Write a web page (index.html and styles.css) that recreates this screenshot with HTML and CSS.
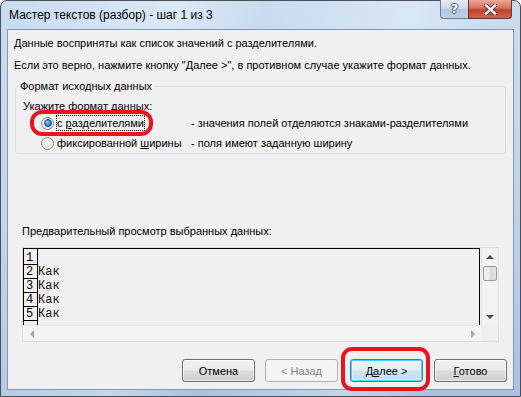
FILE: index.html
```html
<!DOCTYPE html>
<html lang="ru">
<head>
<meta charset="utf-8">
<title>Мастер текстов</title>
<link rel="stylesheet" href="styles.css">
</head>
<body>
<div class="window">
  <div class="titlebar">
    <span class="title">Мастер текстов (разбор) - шаг 1 из 3</span>
    <div class="caption-btns">
      <div class="cbtn help">?</div>
      <div class="cbtn close">
        <svg width="13" height="11" viewBox="0 0 13 11">
          <path d="M2 1.5 L11 9.5 M11 1.5 L2 9.5" stroke="#5a2a22" stroke-width="4.2" stroke-linecap="square"/>
          <path d="M2 1.5 L11 9.5 M11 1.5 L2 9.5" stroke="#ffffff" stroke-width="2.4" stroke-linecap="square"/>
        </svg>
      </div>
    </div>
  </div>
  <div class="client">
    <p class="line l1">Данные восприняты как список значений с разделителями.</p>
    <p class="line l2">Если это верно, нажмите кнопку "Далее &gt;", в противном случае укажите формат данных.</p>
    <fieldset class="group">
      <legend>Формат исходных данных</legend>
      <div class="prompt">Укажите формат данных:</div>
      <div class="opt first">
        <span class="radio checked"></span>
        <span class="optlabel focus">с <u>р</u>азделителями</span>
        <span class="desc">- значения полей отделяются знаками-разделителями</span>
        <div class="mark mark-radio"></div>
      </div>
      <div class="opt">
        <span class="radio"></span>
        <span class="optlabel">фиксированной <u>ш</u>ирины</span>
        <span class="desc">- поля имеют заданную ширину</span>
      </div>
    </fieldset>
    <div class="preview-label">Предварительный просмотр выбранных данных:</div>
    <div class="preview">
      <div class="data">
        <div class="row r1"><span class="num">1</span><span class="cell"></span></div>
        <div class="row"><span class="num">2</span><span class="cell">Как</span></div>
        <div class="row"><span class="num">3</span><span class="cell">Как</span></div>
        <div class="row"><span class="num">4</span><span class="cell">Как</span></div>
        <div class="row"><span class="num">5</span><span class="cell">Как</span></div>
        <div class="row"><span class="num"></span><span class="cell"></span></div>
      </div>
      <div class="vscroll">
        <div class="sbtn"><span class="tri up"></span></div>
        <div class="thumb"></div>
        <div class="track"></div>
        <div class="sbtn"><span class="tri down"></span></div>
      </div>
      <div class="hscroll">
        <div class="hbtn"><span class="tri left"></span></div>
        <div class="htrack"></div>
        <div class="hbtn"><span class="tri right"></span></div>
      </div>
      <div class="corner"></div>
    </div>
    <div class="buttons">
      <button class="btn cancel">Отмена</button>
      <button class="btn back" disabled>&lt; Назад</button>
      <button class="btn next">Д<u>а</u>лее &gt;<span class="mark mark-next"></span></button>
      <button class="btn finish"><u>Г</u>отово</button>
    </div>
  </div>
</div>
</body>
</html>
```

FILE: styles.css
```css
html, body {
  margin: 0;
  padding: 0;
}
body {
  width: 521px;
  height: 397px;
  overflow: hidden;
  font-family: "Liberation Sans", Arial, sans-serif;
  font-size: 11px;
  color: #000;
  background: #fff;
}

.window {
  box-sizing: border-box;
  width: 521px;
  height: 397px;
  border: 1px solid #4b5057;
  border-radius: 7px 7px 0 0;
  padding: 0 6px 6px 6px;
  display: flex;
  flex-direction: column;
  background:
    linear-gradient(100deg, rgba(255,255,255,0.0) 0%, rgba(255,255,255,0.35) 30%, rgba(255,255,255,0.0) 45%, rgba(255,255,255,0.3) 70%, rgba(255,255,255,0) 85%),
    linear-gradient(180deg, #c9dcf1 0%, #bfd4ed 50%, #a9c2e1 100%);
}

.titlebar {
  height: 28px;
  display: flex;
  align-items: flex-start;
}
.title {
  font-size: 12px;
  line-height: 28px;
  padding-left: 2px;
  color: #000;
}
.caption-btns {
  margin-left: auto;
  margin-right: 2px;
  margin-top: -1px;
  display: flex;
}
.cbtn {
  height: 19px;
  box-sizing: border-box;
  display: flex;
  align-items: center;
  justify-content: center;
}
.help {
  width: 28px;
  border: 1px solid #6b7c92;
  border-top: none;
  border-right: none;
  border-radius: 0 0 0 4px;
  background: linear-gradient(180deg, #e4ecf6 0%, #ccdaea 45%, #b4c6dc 55%, #c2d3e6 100%);
  color: #fff;
  font-family: "DejaVu Sans", sans-serif;
  font-weight: bold;
  font-size: 13px;
  text-shadow: 1px 0 0 #4c5a6c, -1px 0 0 #4c5a6c, 0 1px 0 #4c5a6c, 0 -1px 0 #4c5a6c;
  padding-bottom: 1px;
}
.close {
  width: 44px;
  border: 1px solid #6a3328;
  border-top: none;
  border-radius: 0 0 4px 0;
  background: linear-gradient(180deg, #e9a99c 0%, #d7705f 45%, #c0402b 55%, #d2624e 100%);
}

.client {
  flex: 1;
  position: relative;
  border: 1px solid #8597ae;
  background: #f0f0f0;
  padding: 6px 6px 0 6px;
  display: flex;
  flex-direction: column;
}

.line {
  margin: 0;
  line-height: 14px;
  white-space: nowrap;
}
.l2 {
  margin-top: 8px;
}

.group {
  margin: 7px 0 0 1px;
  width: 491px;
  box-sizing: border-box;
  border: 1px solid #d5dfe5;
  border-radius: 3px;
  padding: 0 0 0 0;
  min-width: 0;
}
.group legend {
  margin-left: 2px;
  padding: 0 2px;
  line-height: 14px;
}
.prompt {
  padding: 6px 0 0 7px;
  line-height: 14px;
}
.opt {
  position: relative;
  height: 20px;
  display: flex;
  align-items: center;
  padding-left: 25px;
}
.radio {
  box-sizing: border-box;
  width: 13px;
  height: 13px;
  border-radius: 50%;
  border: 1px solid #8f8f8f;
  background: radial-gradient(circle at 50% 40%, #fdfdfd 0%, #e3e3e3 70%, #d0d0d0 100%);
  display: flex;
  align-items: center;
  justify-content: center;
  flex: none;
}
.radio.checked::after {
  content: "";
  width: 6px;
  height: 6px;
  border-radius: 50%;
  background: radial-gradient(circle at 40% 35%, #8fd3ff 0%, #2a8ad4 55%, #14508f 100%);
  border: 0.5px solid #1c4f86;
}
.optlabel {
  margin-left: 2px;
  width: 134px;
  line-height: 14px;
  white-space: nowrap;
}
.optlabel.focus {
  width: auto;
  border: 1px dotted #000;
  padding: 0 0 0 0;
  margin-right: 46px;
}
.opt .optlabel:not(.focus) {
  margin-left: 3px;
  margin-right: 0;
}
.opt:not(.first) .desc {
  margin-left: 0;
}
.desc {
  white-space: nowrap;
  line-height: 14px;
}

.mark {
  position: absolute;
  box-sizing: border-box;
  border: 4px solid #e8141f;
  pointer-events: none;
}
.mark-radio {
  left: 14px;
  top: -3px;
  width: 123px;
  height: 26px;
  border-radius: 12px;
}

.preview-label {
  margin: 70px 0 0 8px;
  line-height: 14px;
}
.preview {
  margin: 9px 0 0 8px;
  width: 477px;
  height: 95px;
  box-sizing: border-box;
  border: 1px solid #dcdcdc;
  display: grid;
  grid-template-columns: 1fr 17px;
  grid-template-rows: 1fr 16px;
  background: #f0f0f0;
}
.data {
  border-top: 1px solid #000;
  border-left: 1px solid #000;
  border-right: 1px solid #000;
  overflow: hidden;
  font-family: "Liberation Mono", "Courier New", monospace;
  font-size: 12px;
  margin-right: 1px;
}
.row {
  display: flex;
  height: 14px;
  line-height: 14px;
}
.row.r1 {
  height: 16px;
  line-height: 18px;
}
.num {
  box-sizing: border-box;
  width: 14px;
  padding-left: 2px;
  border-right: 1px solid #000;
  border-bottom: 1px solid #000;
  flex: none;
}
.cell {
  color: #1a1205;
  padding-left: 0;
}

.vscroll {
  display: flex;
  flex-direction: column;
  background: #f3f3f3;
  border-left: 1px solid #e6e6e6;
}
.sbtn {
  height: 17px;
  display: flex;
  align-items: center;
  justify-content: center;
}
.thumb {
  height: 15px;
  margin: 1px 1px 0 1px;
  box-sizing: border-box;
  border: 1px solid #989898;
  border-radius: 2px;
  background: linear-gradient(90deg, #f2f2f2 0%, #e8e8e8 50%, #d9d9d9 55%, #e2e2e2 100%);
}
.track {
  flex: 1;
}
.tri {
  width: 0;
  height: 0;
  display: block;
}
.tri.up {
  border-left: 4px solid transparent;
  border-right: 4px solid transparent;
  border-bottom: 4px solid #4d4d4d;
}
.tri.down {
  border-left: 4px solid transparent;
  border-right: 4px solid transparent;
  border-top: 4px solid #4d4d4d;
}
.hscroll {
  display: flex;
  align-items: center;
  background: #f3f3f3;
  border-top: 1px solid #e6e6e6;
}
.hbtn {
  width: 17px;
  height: 100%;
  display: flex;
  align-items: center;
  justify-content: center;
}
.htrack {
  flex: 1;
}
.tri.left {
  border-top: 4px solid transparent;
  border-bottom: 4px solid transparent;
  border-right: 4px solid #a3a3a3;
}
.tri.right {
  border-top: 4px solid transparent;
  border-bottom: 4px solid transparent;
  border-left: 4px solid #a3a3a3;
}
.corner {
  background: #f0f0f0;
}

.buttons {
  margin-top: 17px;
  display: flex;
  justify-content: flex-end;
  padding-right: 0;
}
.btn {
  position: relative;
  box-sizing: border-box;
  width: 73px;
  height: 23px;
  padding: 0;
  font-family: "Liberation Sans", Arial, sans-serif;
  font-size: 11px;
  color: #000;
  border: 1px solid #707070;
  border-radius: 3px;
  background: linear-gradient(180deg, #f2f2f2 0%, #ebebeb 48%, #dddddd 52%, #cfcfcf 100%);
  box-shadow: inset 0 0 0 1px rgba(255,255,255,0.7);
}
.btn.back {
  margin-left: 10px;
  border-color: #adb2b5;
  background: #f4f4f4;
  color: #838383;
  box-shadow: none;
}
.btn.next {
  margin-left: 12px;
  border-color: #3c7fb1;
  box-shadow: inset 0 0 0 1px #48d3fb, inset 0 0 0 2px rgba(255,255,255,0.5);
  background: linear-gradient(180deg, #eaf4fb 0%, #e2eef8 48%, #d0e3f2 52%, #c4dbee 100%);
}
.btn.finish {
  margin-left: 11px;
}
.mark-next {
  left: -10px;
  top: -13px;
  width: 89px;
  height: 44px;
  border-radius: 11px;
}
```
